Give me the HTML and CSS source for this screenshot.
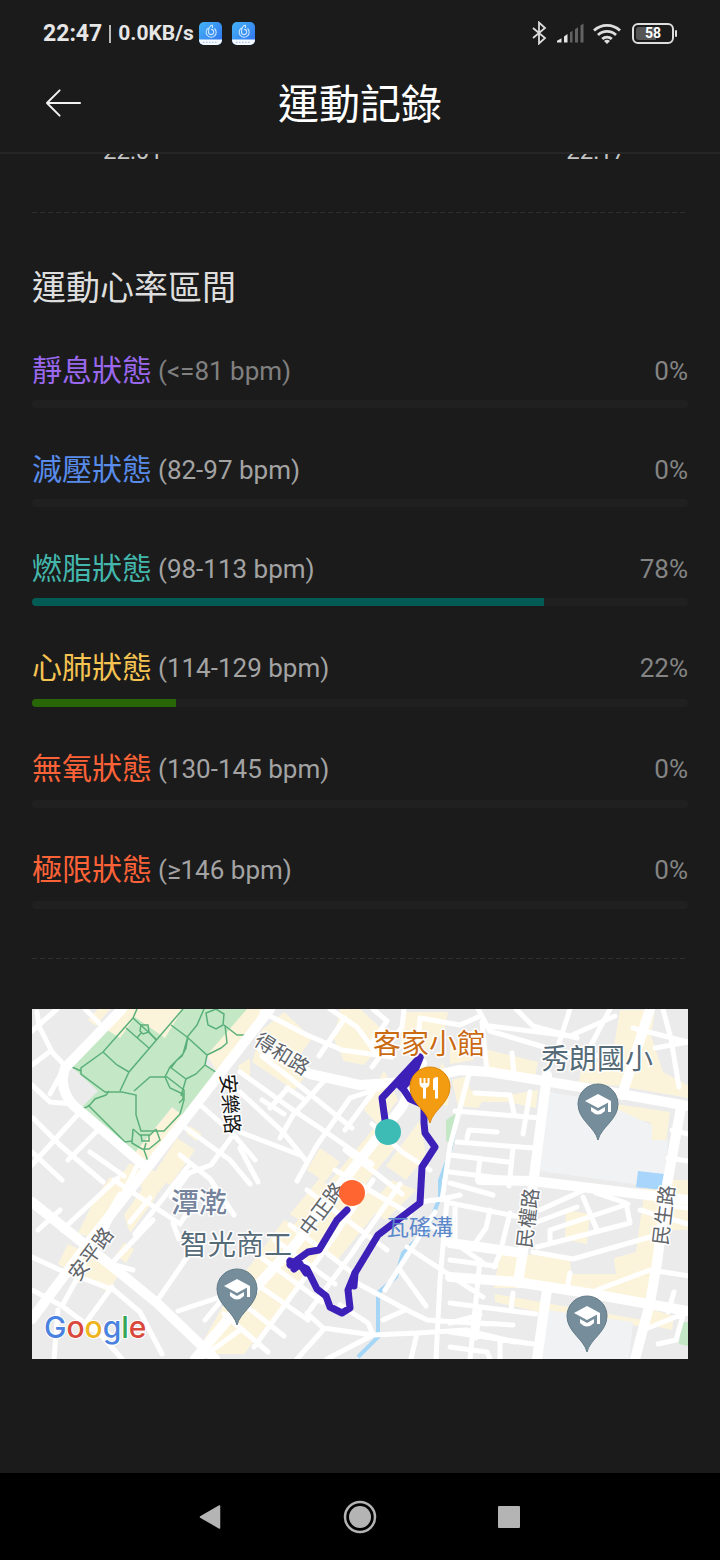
FILE: index.html
```html
<!DOCTYPE html>
<html lang="zh-Hant">
<head>
<meta charset="utf-8">
<meta name="viewport" content="width=device-width, initial-scale=1">
<title>運動記錄</title>
<link rel="stylesheet" href="styles.css">
</head>
<body>
<div class="status-bar">
  <div class="status-left">
    <span class="clock">22:47</span>
    <span class="divider"></span>
    <span class="speed">0.0KB/s</span>
    <svg class="app-badge" viewBox="0 0 23 23" aria-hidden="true">
      <defs><linearGradient id="badge" x1="0" y1="0" x2="1" y2="1"><stop offset="0" stop-color="#45b4f5"/><stop offset="1" stop-color="#2f6ff0"/></linearGradient></defs>
      <rect width="23" height="23" rx="5" fill="url(#badge)"/>
      <path d="M0 17.500h23V18a5 5 0 0 1-5 5H5a5 5 0 0 1-5-5z" fill="#f4f8ff"/>
      <path d="M4 20.300h15" stroke="#9db8dd" stroke-width="1" stroke-dasharray="1.500 1.500"/>
      <path d="M13.500 3c-3.500.8-4 3-4 7a2.600 2.600 0 1 0 2.600-2.600M13.500 3v3M9.500 6a5 5 0 1 0 6 .5" fill="none" stroke="#c9e6ff" stroke-width="1.100"/>
    </svg>
    <svg class="app-badge app-badge-next" viewBox="0 0 23 23" aria-hidden="true">
      <rect width="23" height="23" rx="5" fill="url(#badge)"/>
      <path d="M0 17.500h23V18a5 5 0 0 1-5 5H5a5 5 0 0 1-5-5z" fill="#f4f8ff"/>
      <path d="M4 20.300h15" stroke="#9db8dd" stroke-width="1" stroke-dasharray="1.500 1.500"/>
      <path d="M13.500 3c-3.500.8-4 3-4 7a2.600 2.600 0 1 0 2.600-2.600M13.500 3v3M9.500 6a5 5 0 1 0 6 .5" fill="none" stroke="#c9e6ff" stroke-width="1.100"/>
    </svg>
  </div>
  <div class="status-right">
    <svg width="15" height="24" viewBox="0 0 15 24" fill="none" stroke="#dcdcdc" stroke-width="1.800" aria-hidden="true"><path d="M1 7l12 10-6 5.500V1.500L13 7 1 17"/></svg>
    <svg width="28" height="20" viewBox="0 0 28 20" aria-hidden="true">
      <path d="M1 19.500v-1.700l4.500-2.600v4.300zM8 19.500v-6l3.500-2.500v8.500z" fill="#e4e4e4"/>
      <path d="M14 19.500V9.500l2.500-1.800v11.800zM19 19.500V6.200l3-2v15.300zM24.500 19.500V2.500l3-2v19z" fill="#636363"/>
    </svg>
    <svg width="28" height="21" viewBox="0 0 28 21" fill="none" stroke="#dedede" stroke-width="2.800" aria-hidden="true"><path d="M1 7.500a19 19 0 0 1 26 0M5 12a13 13 0 0 1 18 0M9.200 16a7 7 0 0 1 9.600 0"/><path d="M11 18l3 3 3-3a4.500 4.500 0 0 0-6 0z" fill="#dedede" stroke="none"/></svg>
    <span class="battery"><span class="battery-level">58</span></span>
  </div>
</div>

<header class="title-bar">
  <button class="back" type="button" aria-label="返回">
    <svg width="38" height="30" viewBox="0 0 38 30" fill="none" stroke="#f2f2f2" stroke-width="2" stroke-linecap="round" stroke-linejoin="round"><path d="M36 15H2M15 2L2 15l13 13"/></svg>
  </button>
  <h1>運動記錄</h1>
</header>

<main>
  <div class="times"><span>22:01</span><span>22:17</span></div>
  <div class="dashes"></div>

  <section class="zones">
    <h2>運動心率區間</h2>
    <ul>
      <li class="zone rest"><div class="zone-head"><span class="name">靜息狀態</span><span class="range">(&lt;=81 bpm)</span><span class="share">0%</span></div><div class="track"></div></li>
      <li class="zone relax"><div class="zone-head"><span class="name">減壓狀態</span><span class="range">(82-97 bpm)</span><span class="share">0%</span></div><div class="track"></div></li>
      <li class="zone burn"><div class="zone-head"><span class="name">燃脂狀態</span><span class="range">(98-113 bpm)</span><span class="share">78%</span></div><div class="track"><div class="fill" style="width:78%"></div></div></li>
      <li class="zone cardio roomy"><div class="zone-head"><span class="name">心肺狀態</span><span class="range">(114-129 bpm)</span><span class="share">22%</span></div><div class="track"><div class="fill" style="width:22%"></div></div></li>
      <li class="zone anaerobic roomy"><div class="zone-head"><span class="name">無氧狀態</span><span class="range">(130-145 bpm)</span><span class="share">0%</span></div><div class="track"></div></li>
      <li class="zone limit roomy"><div class="zone-head"><span class="name">極限狀態</span><span class="range">(≥146 bpm)</span><span class="share">0%</span></div><div class="track"></div></li>
    </ul>
  </section>
  <div class="dashes"></div>

  <svg class="map" viewBox="32 1009 656 350" role="img" aria-label="運動路線地圖">
    <defs>
      <g id="pin"><path d="M0 36C-3 23-20 16-20 0a20 20 0 0 1 40 0C20 16 3 23 0 36z"/></g>
      <g id="school">
        <use href="#pin" fill="#768e9b" stroke="#627b88" stroke-width="1"/>
        <path d="M-13-3L0-10 13-3 0 4zM-7 3v4q7 7 14 0V3L0 7zM10-3h3v11h-3z" fill="#fff"/>
      </g>
    </defs>
    <rect x="32" y="1009" width="656" height="350" fill="#ebebeb"/>

    <g class="commercial">
      <path d="M118 1009H250L220 1050 100 1035z"/>
      <path d="M88 1020l10-11h12l-14 17zM207 1055l40-46h20l-49 64zM172 1108l13 9-38 48-14-10z"/>
      <path d="M177 1138l18 12-25 35-17-10zM190 1126l12 8-6 7-10-8zM238 1066l12-8v20l-10-4zM130 1163l12 8-14 14h-14z"/>
      <path d="M262 1030l22-18 28 26-20 28 12 12-10 12-42-28zM340 1009h20l28 26-24 30-20-4-10-22zM404 1012h44l-4 20-20 20-24-6zM384 1070l14 30-20 24-14-14zM442 1062l8 14-2 30-18-6z"/>
      <path d="M374 1128l24 16-60 74-34 30-16-16zM420 1120l6 36-20 24-20-14zM320 1148l20 14-15 20-18-12z"/>
      <path d="M450 1046l20-2 4 16-24 4zM488 1050l50 12-3 15-48-8zM452 1080l16-4 2 14 34 6 34-6-2 18-28-6-26 0-4 6-20-2zM620 1010h35l-4 26 12 36 26 14v12l-70-12-40-4 4-24 28 6zM615 1104l55 8-4 30-14-2-2-18-34-6z"/>
      <path d="M96 1197l14-20 20 8-36 54-16-6zM124 1215l18-26 14 8-26 36zM140 1186l12-16 18 8-18 22zM116 1255l8-12 10 6-8 14z"/>
      <path d="M68 1244l46 22 4 10-10 16-50-28zM232 1290l52-70 50 22-90 112H196zM290 1214l30-36 36 34-24 30zM356 1184l30 16-50 62-26-20zM392 1180l24 10-30 30-18-12z"/>
      <path d="M500 1252l70 6 1 16 45 0-2-16 22-6 10-72h20l-12 90-10 32-22 2-85-16-43 0z"/>
      <path d="M495 1294l148 26-4 6-92-12-52-12zM664 1180h24v50h-28zM646 1308l28 8-2 14-26-6zM566 1210l24 4-3 30-22-5z"/>
    </g>

    <path class="park" d="M104 1028L72 1067l26 24-18 18 53 46 39-48 13 10 34-44-14-9 2-9 40-46h-64l-18 29-30-21-15 21z"/>
    <g class="park-path">
      <path d="M137 1009l-4 9-30 34-22 16v6l24 18h17l14 3v20l5 16h23l16-17 4-14v-10l-17-13h-17l-16 14M120 1091l9-19 54-63M126 1028l24 21M133 1018l24 22M103 1052l14 13 12 7M72 1067l9 4M80 1110l9-4 6-7 11-4 3-4M88 1105l37 37 7-1 1-9M133 1129l-1 14 10 6h7l11-9-4-11"/>
      <path d="M141 1025h7l1 7-6 2-3-3zM137 1038l4-5M149 1032l7 8M141 1135h8v6h-7zM133 1129l8 7M156 1129l-7 7M146 1143l-2 7 5 14M171 1025l16 12 20 18 14-7 6-5-2-18M204 1009l-7 16-9 11-5 18-13 13-5 10 5 11 13 6v5l-4 4M170 1067l16 12-5 17M186 1079l10-5 9-9 2-10M206 1013l10-4 8 5-1 11-7 4-8-4zM224 1025l13 10h10M205 1065l12 8M188 1036l-2 12-4 8-6 5-5 7"/>
    </g>
    <g class="school-ground">
      <path d="M550 1092l47 8 55 25v15h16l-5 48-123-17zM547 1310l86 12-4 37h-90z"/>
    </g>
    <path class="park" d="M446 1120l12-8-4 32-8-3zM681 1322h7v24l-9-2z"/>
    <path d="M638 1171l26 3-3 16-25-3z" fill="#a8d5fb"/>
    <path class="river" d="M457 1118l-8 38-9 24v17l-13 33-24 23-7 24-18 16v44l-20 20"/>

    <g class="streets small">
      <path d="M37 1012l2 14 13 26 15 16M57 1009l-25 22M62 1072l-12 22M32 1085l18 17 22 2M32 1065l16-12M80 1112l-30 33-20 22M33 1118l27 27 43 37M32 1152l30 28M90 1152l34 24M100 1128l-32 32M183 1126l47 34 20 24M197 1102l36 32 22 26M233 1135l-22 30-22 8-18 24M85 1009l14 14"/>
      <path d="M262 1012l45 23 35 15 50 7M345 1018l-26 38M330 1009l27 18 22 30M373 1009l14 12-15 22M404 1009l-2 18-30 40M420 1018l40 7 18-8M420 1018l-4 42M262 1056l28 22 62 50M240 1072l53 38 27 18 52 36M240 1092l43 40 24 30M323 1082l-30 33-13 23M350 1098l-33 47-20 36M240 1132l60 23M240 1148l18 34M380 1088l-30 10M345 1130l28-38M305 1100l-18-12M270 1108l18-20M372 1124l30 28 28 18M345 1150l32 24 25 20M262 1100l22 14"/>
      <path d="M478 1009l12 22 37 11 34 10 40 4M490 1026l80 10 45-20M516 1009l17 17 44 12M570 1009l-11 34M610 1009l-20 38M633 1028l55 14M663 1009l8 30 8 48M482 1022l5 50M512 1053l2 22M475 1093l35 2 4 18M530 1092l-7 42M455 1111l85 7M467 1138l2-8 28 2M457 1142l76 6M450 1155l58 7M513 1148l-4 38M450 1172l82 10M480 1158l-2 18M470 1070l-20 76-8 54M655 1048l33-6M672 1130l16 4M668 1158l20 3"/>
      <path d="M450 1183l43 12M450 1203l70 14M510 1213l-10 40-6 14M455 1207v38M490 1210l-4 18-10 14M450 1260l46 6M540 1210l44-20M537 1222l40-15M537 1247l93-24-4-20-30-10M550 1243v-13l78-26M583 1197l14 33M533 1252l40 7 77-22M597 1290l53-20 40 6M640 1210l48 14M570 1273l-3 16M513 1293l-2 16M450 1303l86 11M480 1308l-4 30M450 1323l30-8M480 1323l33 2M450 1332l83 12M500 1340v19M450 1347l37 5 3 7M643 1330l45-18M684 1312l-8 28-18 4M674 1292l-6 20M665 1205l23 3"/>
      <path d="M32 1257l28 13 54 20 26 22 22 42M32 1290l30 16 40 30 20 23M62 1306l22-40M84 1325l28-38M58 1310l-4 49M88 1320l30 20M118 1178l-56 52M140 1160l-40 80M114 1180l66 44 13-20 10-12M153 1220l-42 44 22 6M173 1223l6 16M190 1253l-33 48M250 1278l-30 19-42 14M120 1194l-20 34M130 1222l20-24M180 1155l30 24 24 36M205 1320l35-42M240 1330l-40 29M38 1230l22-20M190 1164l-55 70"/>
      <path d="M373 1180l-53 77-66 90M400 1184l-50 72-40 54M307 1190l80 60M290 1225l60 46M275 1240l60 44M262 1258l60 44M248 1278l60 42M236 1298l48 38M224 1314l44 38M335 1170l75 44M357 1283l50 27 20 10 61 4M307 1313l16 15 50 7 44-2 50-3M323 1330l-26 29M373 1335l-46 24M417 1333l-6 26M447 1200l-7 80-4 79M400 1270l26 36M407 1247l76 50M430 1225l56 40M460 1195l-18 4-22 3M385 1290l50-78M340 1305l28 18 5 12M480 1260l-10 99M405 1310l-22 10M465 1330l50 12"/>
    </g>
    <g class="streets wide">
      <path d="M270 1009L148 1167l-55 70-61 82M122 1009l-57 59q-7 20 8 37l74 63M32 1202l81 65 44 36 46 44 12 12M195 1359l50-60 50-54 45-60 62-78 20-44"/>
      <path d="M262 1048l48 26 50 11 46-3 54-12 30 2 120 20 78 14M547 1075l-14 110-10 66-5 32M650 1009l-28 86M681 1107l-14 78-10 78-7 40-16 60M450 1277l67 5 76 12 95 17M450 1243l73 10M547 1290l-10 69M480 1180l53 1 155 19"/>
    </g>

    <g class="route">
      <path d="M385 1120l-3-22 15-16 23-25-18 30 8 12 14 6v18l1 10 10 14-13 20-2 36-42 32-23 38-7 17 2 18-8 5-12-6-4-11-9-7-10-20-17-8M290 1265l18-13 11-2 9-15 9-15 10-10"/>
      <path d="M397 1083l23-25-8 20-10 10zM355 1273l-1 13M290 1262l10 2-6 5M302 1267l4 6"/>
    </g>
    <circle cx="388" cy="1132" r="13" fill="#3cbcb4"/>

    <g transform="translate(430 1087)">
      <use href="#pin" fill="#f39c12" stroke="#dd8709" stroke-width="1"/>
      <path d="M-10.500-9v5q0 4 3.500 5v10.500h3V1q3.500-1 3.500-5v-5h-2v5h-2v-5h-2v5h-2v-5zM3 11.500V-7q0-3 5-3v21.500H5V3H3z" fill="#fff"/>
    </g>
    <use href="#school" x="598" y="1104"/>
    <use href="#school" x="237" y="1289"/>
    <use href="#school" x="587" y="1316"/>

    <g class="labels">
      <text class="place food" x="429" y="1054">客家小館</text>
      <text class="place" x="597" y="1069">秀朗國小</text>
      <text class="place" x="236" y="1255">智光商工</text>
      <text class="district" x="199" y="1213">潭漧</text>
      <text class="water" x="420" y="1235">瓦磘溝</text>
      <text class="road" transform="translate(282 1054) rotate(32)" y="7">得和路</text>
      <text class="road strong" transform="translate(230 1104) rotate(85)" y="7">安樂路</text>
      <text class="road" transform="translate(322 1209) rotate(-53)" y="7">中正路</text>
      <text class="road" transform="translate(91 1254) rotate(-53)" y="7">安平路</text>
      <text class="road" transform="translate(528 1218) rotate(-83)" y="7">民權路</text>
      <text class="road" transform="translate(664 1215) rotate(-83)" y="7">民生路</text>
    </g>
    <circle cx="352" cy="1193" r="13" fill="#ff6531"/>
    <text class="google" x="44" y="1338"><tspan fill="#4a82e0">G</tspan><tspan fill="#d9483b">o</tspan><tspan fill="#efb51e">o</tspan><tspan fill="#4a82e0">g</tspan><tspan fill="#35a556">l</tspan><tspan fill="#d9483b">e</tspan></text>
  </svg>
</main>

<nav class="system-nav">
  <button type="button" aria-label="上一頁"><svg width="24" height="26" viewBox="0 0 24 26"><path d="M20.500 2v22L1.500 13z" fill="#b4b4b4" stroke="#b4b4b4" stroke-width="1.500" stroke-linejoin="round"/></svg></button>
  <button type="button" aria-label="首頁"><svg width="34" height="34" viewBox="0 0 34 34"><circle cx="17" cy="17" r="15" fill="none" stroke="#b4b4b4" stroke-width="2.500"/><circle cx="17" cy="17" r="11" fill="#b4b4b4"/></svg></button>
  <button type="button" aria-label="最近使用"><svg width="22" height="22" viewBox="0 0 22 22"><rect width="22" height="22" rx="1" fill="#b4b4b4"/></svg></button>
</nav>
</body>
</html>
```
FILE: styles.css
```css
* {
  box-sizing: border-box;
}

body {
  display: flex;
  flex-direction: column;
  min-height: 100vh;
  margin: 0;
  background: #1b1b1b;
  color: #dedede;
  font-family: Roboto, "Noto Sans CJK TC", sans-serif;
}

h1,
h2,
ul {
  margin: 0;
  padding: 0;
  font-weight: 400;
  list-style: none;
}

button {
  display: flex;
  align-items: center;
  justify-content: center;
  padding: 0;
  border: 0;
  background: none;
}

svg {
  display: block;
}

.status-bar {
  display: flex;
  align-items: center;
  justify-content: space-between;
  height: 66px;
  padding: 0 43px;
}

.status-left,
.status-right {
  display: flex;
  align-items: center;
}

.status-left {
  color: #e6e6e6;
  font-weight: 700;
}

.clock {
  font-size: 23px;
}

.divider {
  width: 2px;
  height: 18px;
  margin: 2px 7px 0;
  background: #b8b8b8;
}

.speed {
  font-size: 21px;
}

.app-badge {
  width: 23px;
  height: 23px;
  margin-left: 5px;
}

.app-badge-next {
  margin-left: 10px;
}

.status-right {
  gap: 9px;
}

.battery {
  position: relative;
  width: 42px;
  height: 21px;
  margin: 0 3px 0 2px;
  padding: 2px;
  border: 2px solid #dedede;
  border-radius: 6px;
}

.battery::after {
  position: absolute;
  top: 5px;
  right: -5px;
  width: 2px;
  height: 7px;
  border-radius: 1px;
  background: #dedede;
  content: "";
}

.battery-level {
  display: block;
  border-radius: 3px;
  background: linear-gradient(90deg, #555 58%, transparent 58%);
  color: #fff;
  font-size: 14px;
  font-weight: 700;
  line-height: 13px;
  text-align: center;
}

.title-bar {
  display: grid;
  grid-template-columns: 82px 1fr 82px;
  align-items: center;
  height: 88px;
  padding-bottom: 8px;
  border-bottom: 2px solid #262626;
}

.back {
  height: 60px;
  padding: 0 0 4px 45px;
  justify-content: flex-start;
}

h1 {
  color: #fff;
  font-size: 41px;
  line-height: 60px;
  text-align: center;
}

main {
  flex: 1;
  padding: 0 32px;
}

.times {
  display: flex;
  justify-content: space-between;
  height: 58px;
  padding: 0 62px 0 71px;
  overflow: hidden;
  color: #c4c4c4;
  font-size: 24px;
  line-height: 30px;
}

.times span {
  margin-top: -18px;
}

.dashes {
  height: 1px;
  background: repeating-linear-gradient(90deg, #303030 0 5px, transparent 5px 8px);
}

h2 {
  padding-top: 50px;
  font-size: 34px;
  line-height: 50px;
}

.zones ul {
  padding: 34px 0 11px;
}

.zone {
  padding-bottom: 38px;
}

.zone-head {
  display: flex;
  height: 53px;
  font-size: 26px;
  line-height: 48px;
}

.roomy .zone-head {
  height: 55px;
}

.name {
  margin-right: 6px;
  font-size: 30px;
}

.range {
  color: #a3a3a3;
}

.share {
  margin-left: auto;
  color: #848484;
}

.track {
  height: 8px;
  overflow: hidden;
  border-radius: 4px;
  background: #202020;
}

.fill {
  height: 100%;
}

.rest .name {
  color: #9a68ee;
}

.rest .range {
  color: #808080;
}

.relax .name {
  color: #588bea;
}

.burn .name {
  color: #43b7ac;
}

.burn .fill {
  background: #035b56;
}

.cardio .name {
  color: #f5c352;
}

.cardio .fill {
  background: #286708;
}

.anaerobic .name,
.limit .name {
  color: #fb6238;
}

.map {
  width: 100%;
  height: auto;
  margin: 50px 0;
}

.commercial {
  fill: #fcf4da;
}

.park {
  fill: #c4e8c6;
}

.park-path {
  fill: none;
  stroke: #5bb07a;
  stroke-width: 1.5;
}

.school-ground {
  fill: #f0f2f4;
}

.river {
  fill: none;
  stroke: #a6d6f6;
  stroke-width: 4;
}

.streets {
  fill: none;
  stroke: #fff;
  stroke-linecap: round;
  stroke-linejoin: round;
}

.small {
  stroke-width: 5;
}

.wide {
  stroke-width: 10;
}

.route {
  fill: none;
  stroke: #3d20b8;
  stroke-width: 7;
  stroke-linecap: round;
  stroke-linejoin: round;
}

.labels {
  fill: #566b78;
  stroke: #fff;
  stroke-width: 3;
  stroke-linejoin: round;
  paint-order: stroke;
  text-anchor: middle;
}

.place {
  font-size: 28px;
}

.food {
  fill: #ca6b13;
}

.district {
  fill: #75849c;
  font-size: 28px;
  font-weight: 500;
}

.water {
  fill: #5b87cb;
  stroke: none;
  font-size: 22px;
}

.road {
  fill: #62666a;
  font-size: 20px;
}

.strong {
  fill: #161616;
}

.google {
  font-family: Inter, sans-serif;
  font-size: 30px;
  font-weight: 500;
  stroke: #fff;
  stroke-width: 2;
  paint-order: stroke;
}

.system-nav {
  display: flex;
  align-items: center;
  justify-content: center;
  gap: 115px;
  height: 87px;
  background: #000;
}

.system-nav button {
  width: 34px;
  height: 48px;
}
```
